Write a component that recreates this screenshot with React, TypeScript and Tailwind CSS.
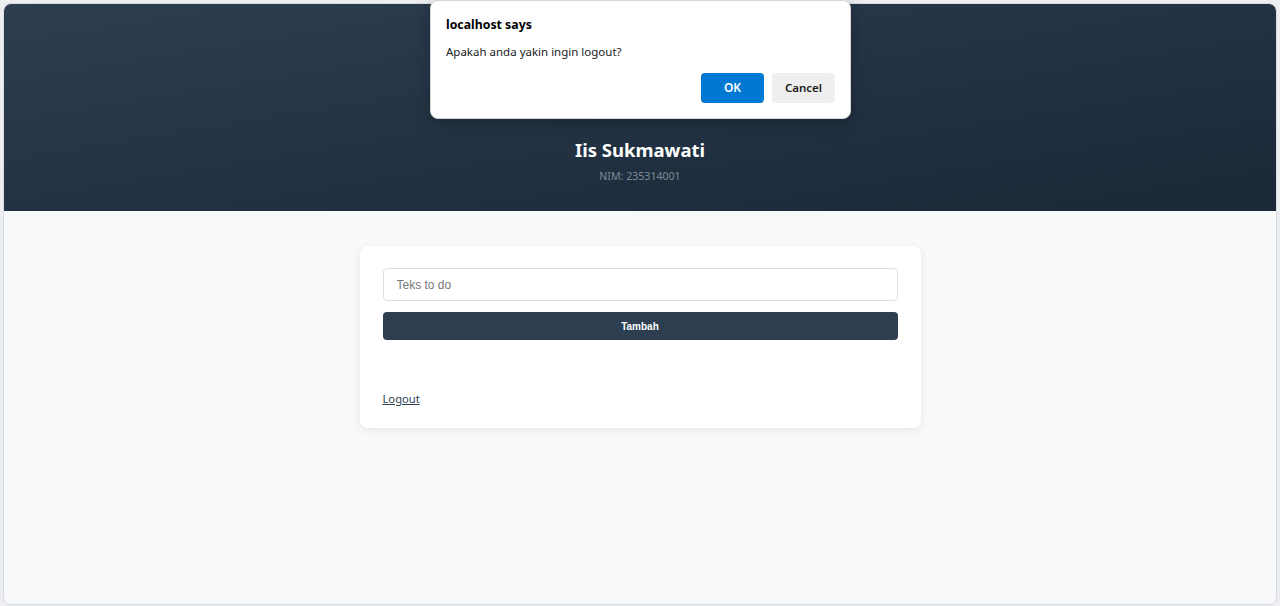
export default function App() {
  return (
    <div className="relative h-[606px] w-full bg-[#eceef1] px-[3px] pt-[3px] pb-[1px]" style={{ fontFamily: '"Noto Sans", "Open Sans", sans-serif' }}>
      {/* jendela */}
      <div className="flex h-full flex-col overflow-hidden rounded-lg border border-[#d9dce0] bg-[#f7f9fb]">
        {/* header */}
        <header className="flex h-[207px] shrink-0 flex-col items-center justify-end bg-gradient-to-br from-[#2c3e50] to-[#1a2837] pb-[26px]">
          <h1 className="text-[18.5px] font-bold leading-7 text-white">Iis Sukmawati</h1>
          <p className="mt-[5px] text-[10.6px] text-[#7f8a96]">NIM: 235314001</p>
        </header>

        {/* konten */}
        <main className="flex justify-center pt-[35px]">
          <div className="w-[561px] rounded-lg bg-white px-[23px] pt-[22px] pb-[21px] shadow-[0_2px_8px_rgba(0,0,0,0.08)]">
            <input
              type="text"
              placeholder="Teks to do"
              className="block h-[33px] w-full rounded-[4px] border border-[#dcdfe3] px-[13px] text-[12px] outline-none placeholder:text-[#777]"
              style={{ fontFamily: '"Liberation Sans", Arial, sans-serif' }}
            />
            <button
              className="mt-[11px] block h-[28px] w-full rounded-[4px] bg-[#2c3e50] text-[10px] font-bold text-white"
              style={{ fontFamily: '"Liberation Sans", Arial, sans-serif' }}
            >
              Tambah
            </button>
            <div className="mt-[49px] leading-[16px]">
              <a href="#" className="text-[11.2px] text-[#2c3e50] underline">
                Logout
              </a>
            </div>
          </div>
        </main>
      </div>

      {/* dialog konfirmasi */}
      <div className="absolute left-[430px] top-0 w-[421px] rounded-lg border border-[#d6d6d6] bg-white px-[15px] pt-[15px] pb-[15px] shadow-[0_4px_16px_rgba(0,0,0,0.25)]">
        <p className="text-[12.3px] font-bold leading-[18px] text-black">localhost says</p>
        <p className="mt-[9px] text-[11.5px] leading-[18px] text-[#1a1a1a]">Apakah anda yakin ingin logout?</p>
        <div className="mt-[12px] flex justify-end gap-2">
          <button className="h-[30px] w-[63px] rounded-[4px] bg-[#0078d4] text-[12px] font-semibold text-white">OK</button>
          <button className="h-[30px] w-[63px] rounded-[4px] bg-[#efefef] text-[11.5px] font-semibold text-[#1a1a1a]">Cancel</button>
        </div>
      </div>
    </div>
  );
}
